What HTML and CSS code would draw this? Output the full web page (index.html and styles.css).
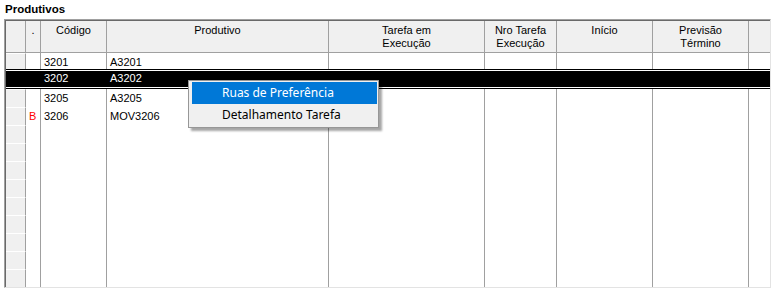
FILE: index.html
```html
<!DOCTYPE html>
<html>
<head>
    <title>Produtivos</title>
    <link rel="stylesheet" href="styles.css">
</head>
<body>
    <div class="title">Produtivos</div>
    <div class="grid">
        <div class="grid-inner">
            <div class="row head">
                <div class="cell ind"></div>
                <div class="cell c-flag">.</div>
                <div class="cell c-cod">Código</div>
                <div class="cell c-prod">Produtivo</div>
                <div class="cell c-tar">Tarefa em<br>Execução</div>
                <div class="cell c-nro">Nro Tarefa<br>Execução</div>
                <div class="cell c-ini">Início</div>
                <div class="cell c-prev">Previsão<br>Término</div>
                <div class="cell c-fill"></div>
            </div>

            <div class="row">
                <div class="cell ind"></div>
                <div class="cell c-flag"></div>
                <div class="cell c-cod">3201</div>
                <div class="cell c-prod">A3201</div>
                <div class="cell c-tar"></div>
                <div class="cell c-nro"></div>
                <div class="cell c-ini"></div>
                <div class="cell c-prev"></div>
                <div class="cell c-fill"></div>
            </div>
            <div class="row sel">
                <div class="cell ind"></div>
                <div class="cell c-flag"></div>
                <div class="cell c-cod">3202</div>
                <div class="cell c-prod">A3202</div>
                <div class="cell c-tar"></div>
                <div class="cell c-nro"></div>
                <div class="cell c-ini"></div>
                <div class="cell c-prev"></div>
                <div class="cell c-fill"></div>
            </div>
            <div class="row">
                <div class="cell ind"></div>
                <div class="cell c-flag"></div>
                <div class="cell c-cod">3205</div>
                <div class="cell c-prod">A3205</div>
                <div class="cell c-tar"></div>
                <div class="cell c-nro"></div>
                <div class="cell c-ini"></div>
                <div class="cell c-prev"></div>
                <div class="cell c-fill"></div>
            </div>
            <div class="row">
                <div class="cell ind"></div>
                <div class="cell c-flag flag-b">B</div>
                <div class="cell c-cod">3206</div>
                <div class="cell c-prod">MOV3206</div>
                <div class="cell c-tar"></div>
                <div class="cell c-nro"></div>
                <div class="cell c-ini"></div>
                <div class="cell c-prev"></div>
                <div class="cell c-fill"></div>
            </div>
            <div class="row"><div class="cell ind"></div><div class="cell c-flag"></div><div class="cell c-cod"></div><div class="cell c-prod"></div><div class="cell c-tar"></div><div class="cell c-nro"></div><div class="cell c-ini"></div><div class="cell c-prev"></div><div class="cell c-fill"></div></div>
            <div class="row"><div class="cell ind"></div><div class="cell c-flag"></div><div class="cell c-cod"></div><div class="cell c-prod"></div><div class="cell c-tar"></div><div class="cell c-nro"></div><div class="cell c-ini"></div><div class="cell c-prev"></div><div class="cell c-fill"></div></div>
            <div class="row"><div class="cell ind"></div><div class="cell c-flag"></div><div class="cell c-cod"></div><div class="cell c-prod"></div><div class="cell c-tar"></div><div class="cell c-nro"></div><div class="cell c-ini"></div><div class="cell c-prev"></div><div class="cell c-fill"></div></div>
            <div class="row"><div class="cell ind"></div><div class="cell c-flag"></div><div class="cell c-cod"></div><div class="cell c-prod"></div><div class="cell c-tar"></div><div class="cell c-nro"></div><div class="cell c-ini"></div><div class="cell c-prev"></div><div class="cell c-fill"></div></div>
            <div class="row"><div class="cell ind"></div><div class="cell c-flag"></div><div class="cell c-cod"></div><div class="cell c-prod"></div><div class="cell c-tar"></div><div class="cell c-nro"></div><div class="cell c-ini"></div><div class="cell c-prev"></div><div class="cell c-fill"></div></div>
            <div class="row"><div class="cell ind"></div><div class="cell c-flag"></div><div class="cell c-cod"></div><div class="cell c-prod"></div><div class="cell c-tar"></div><div class="cell c-nro"></div><div class="cell c-ini"></div><div class="cell c-prev"></div><div class="cell c-fill"></div></div>
            <div class="row"><div class="cell ind"></div><div class="cell c-flag"></div><div class="cell c-cod"></div><div class="cell c-prod"></div><div class="cell c-tar"></div><div class="cell c-nro"></div><div class="cell c-ini"></div><div class="cell c-prev"></div><div class="cell c-fill"></div></div>
            <div class="row"><div class="cell ind"></div><div class="cell c-flag"></div><div class="cell c-cod"></div><div class="cell c-prod"></div><div class="cell c-tar"></div><div class="cell c-nro"></div><div class="cell c-ini"></div><div class="cell c-prev"></div><div class="cell c-fill"></div></div>
            <div class="row"><div class="cell ind"></div><div class="cell c-flag"></div><div class="cell c-cod"></div><div class="cell c-prod"></div><div class="cell c-tar"></div><div class="cell c-nro"></div><div class="cell c-ini"></div><div class="cell c-prev"></div><div class="cell c-fill"></div></div>
        </div>

        <!-- context menu opened on the selected row -->
        <div class="menu">
            <div class="menu-item active">Ruas de Preferência</div>
            <div class="menu-item">Detalhamento Tarefa</div>
        </div>
    </div>
</body>
</html>
```

FILE: styles.css
```css
body {
    margin: 0;
    font-family: "Liberation Sans", Arial, sans-serif;
    font-size: 11px;
    color: #000;
    background: #fff;
}
.title {
    box-sizing: border-box;
    height: 19px;
    padding: 2px 0 0 5px;
    font-size: 11.5px;
    line-height: 14px;
    font-weight: bold;
}
.grid {
    position: relative;
    box-sizing: border-box;
    width: 767px;
    margin-left: 4px;
    border: 1px solid;
    border-color: #a0a0a0 #e3e3e3 #e3e3e3 #a0a0a0;
}
.grid-inner {
    border-top: 1px solid #696969;
    border-left: 1px solid #696969;
}
.row {
    display: flex;
    height: 18px;
    line-height: 18px;
}
.cell {
    box-sizing: border-box;
    padding: 0 3px;
    border-right: 1px solid #a0a0a0;
    white-space: nowrap;
    overflow: hidden;
}
.head {
    height: 31px;
    line-height: 13px;
    background: #f0f0f0;
    border-bottom: 1px solid #a0a0a0;
}
.head .cell {
    padding-top: 3px;
    text-align: center;
}
.ind {
    width: 20px;
    background: #f0f0f0;
    border-top: 1px solid #fff;
}
.head .ind {
    border-top: none;
}
.c-flag { width: 15px; }
.c-cod { width: 66px; }
.c-prod { width: 222px; }
.c-tar { width: 156px; }
.c-nro { width: 72px; }
.c-ini { width: 96px; }
.c-prev { width: 96px; }
.c-fill {
    flex: 1;
    border-right: none;
}
.flag-b {
    color: #f00;
}

/* selected row: black with a thin white inner frame */
.sel {
    position: relative;
    z-index: 1;
    background: #000;
    color: #fff;
    line-height: 14px;
    box-shadow: 0 -1px 0 #fff, 0 -2px 0 #000, inset 0 -1px 0 #000, inset 0 -2px 0 #fff;
}
.sel .cell {
    border-right-color: transparent;
}
.sel .ind {
    background: transparent;
    border-top-color: transparent;
}

.menu {
    position: absolute;
    left: 183px;
    top: 60px;
    z-index: 5;
    box-sizing: border-box;
    width: 191px;
    padding: 1px 1px 1px 3px;
    background: #f0f0f0;
    border: 1px solid #979797;
    box-shadow: 3px 3px 2px rgba(0, 0, 0, 0.35);
    font-family: "Noto Sans", sans-serif;
    font-size: 12px;
}
.menu-item {
    height: 22px;
    line-height: 22px;
    padding-left: 30px;
    white-space: nowrap;
}
.menu-item.active {
    background: #0078d7;
    color: #fff;
}
```
